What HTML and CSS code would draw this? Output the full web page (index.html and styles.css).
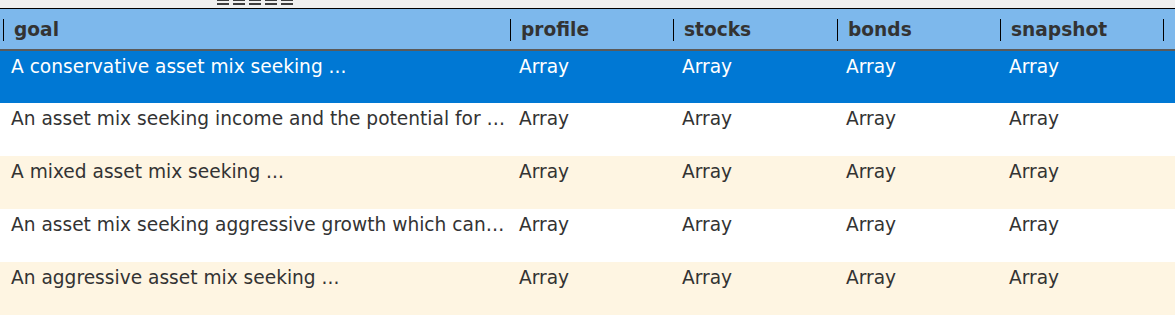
FILE: index.html
```html
<!DOCTYPE html>
<html>
<head>
<meta charset="utf-8">
<link rel="stylesheet" href="styles.css">
</head>
<body>
<div class="grip-bar">
  <div class="grip"><span></span><span></span><span></span><span></span><span></span></div>
</div>
<div class="table">
  <div class="head">
    <div class="hcell"><span>goal</span></div>
    <div class="hcell"><span>profile</span></div>
    <div class="hcell"><span>stocks</span></div>
    <div class="hcell"><span>bonds</span></div>
    <div class="hcell"><span>snapshot</span></div>
    <div class="hcell"><span></span></div>
  </div>
  <div class="row selected">
    <div class="cell">A conservative asset mix seeking ...</div>
    <div class="cell">Array</div>
    <div class="cell">Array</div>
    <div class="cell">Array</div>
    <div class="cell">Array</div>
  </div>
  <div class="row">
    <div class="cell">An asset mix seeking income and the potential for …</div>
    <div class="cell">Array</div>
    <div class="cell">Array</div>
    <div class="cell">Array</div>
    <div class="cell">Array</div>
  </div>
  <div class="row alt">
    <div class="cell">A mixed asset mix seeking ...</div>
    <div class="cell">Array</div>
    <div class="cell">Array</div>
    <div class="cell">Array</div>
    <div class="cell">Array</div>
  </div>
  <div class="row">
    <div class="cell">An asset mix seeking aggressive growth which can…</div>
    <div class="cell">Array</div>
    <div class="cell">Array</div>
    <div class="cell">Array</div>
    <div class="cell">Array</div>
  </div>
  <div class="row alt">
    <div class="cell">An aggressive asset mix seeking ...</div>
    <div class="cell">Array</div>
    <div class="cell">Array</div>
    <div class="cell">Array</div>
    <div class="cell">Array</div>
  </div>
</div>
</body>
</html>
```
FILE: styles.css
```css
html, body {
  margin: 0;
  padding: 0;
}
body {
  width: 1175px;
  height: 315px;
  overflow: hidden;
  background: #efefef;
  font-family: "DejaVu Sans", Verdana, sans-serif;
  font-size: 18.6px;
  color: #333333;
}
.grip-bar {
  height: 8px;
  width: 508px;
  display: flex;
  justify-content: center;
  align-items: flex-start;
}
.grip {
  display: flex;
  gap: 4px;
  margin-left: 2px;
}
.grip span {
  width: 12px;
  height: 2px;
  border-top: 2px solid #3c3c3c;
  border-bottom: 2px solid #3c3c3c;
  box-sizing: content-box;
  margin-top: -1px;
}
.table {
  border-top: 1px solid #000000;
  background: #ffffff;
}
.head {
  display: grid;
  grid-template-columns: 508px 163px 164px 163px 163px 1fr;
  height: 40px;
  background: #7db8ec;
  border-bottom: 2px solid #5a5a5a;
  font-weight: bold;
}
.hcell {
  display: flex;
  align-items: center;
  padding-left: 2px;
  padding-top: 2px;
}
.hcell:first-child {
  padding-left: 3px;
}
.hcell span {
  border-left: 1px solid #000000;
  padding-left: 10px;
  line-height: 22px;
  height: 22px;
  white-space: nowrap;
}
.row {
  display: grid;
  grid-template-columns: 508px 163px 164px 163px 1fr;
  height: 53px;
  background: #ffffff;
}
.row.selected {
  height: 52px;
  background: #0078d4;
  color: #ffffff;
}
.row.alt {
  background: #fef5e2;
}
.cell {
  padding: 5px 0 0 11px;
  line-height: 21px;
  white-space: nowrap;
  overflow: hidden;
  text-overflow: ellipsis;
}
```
